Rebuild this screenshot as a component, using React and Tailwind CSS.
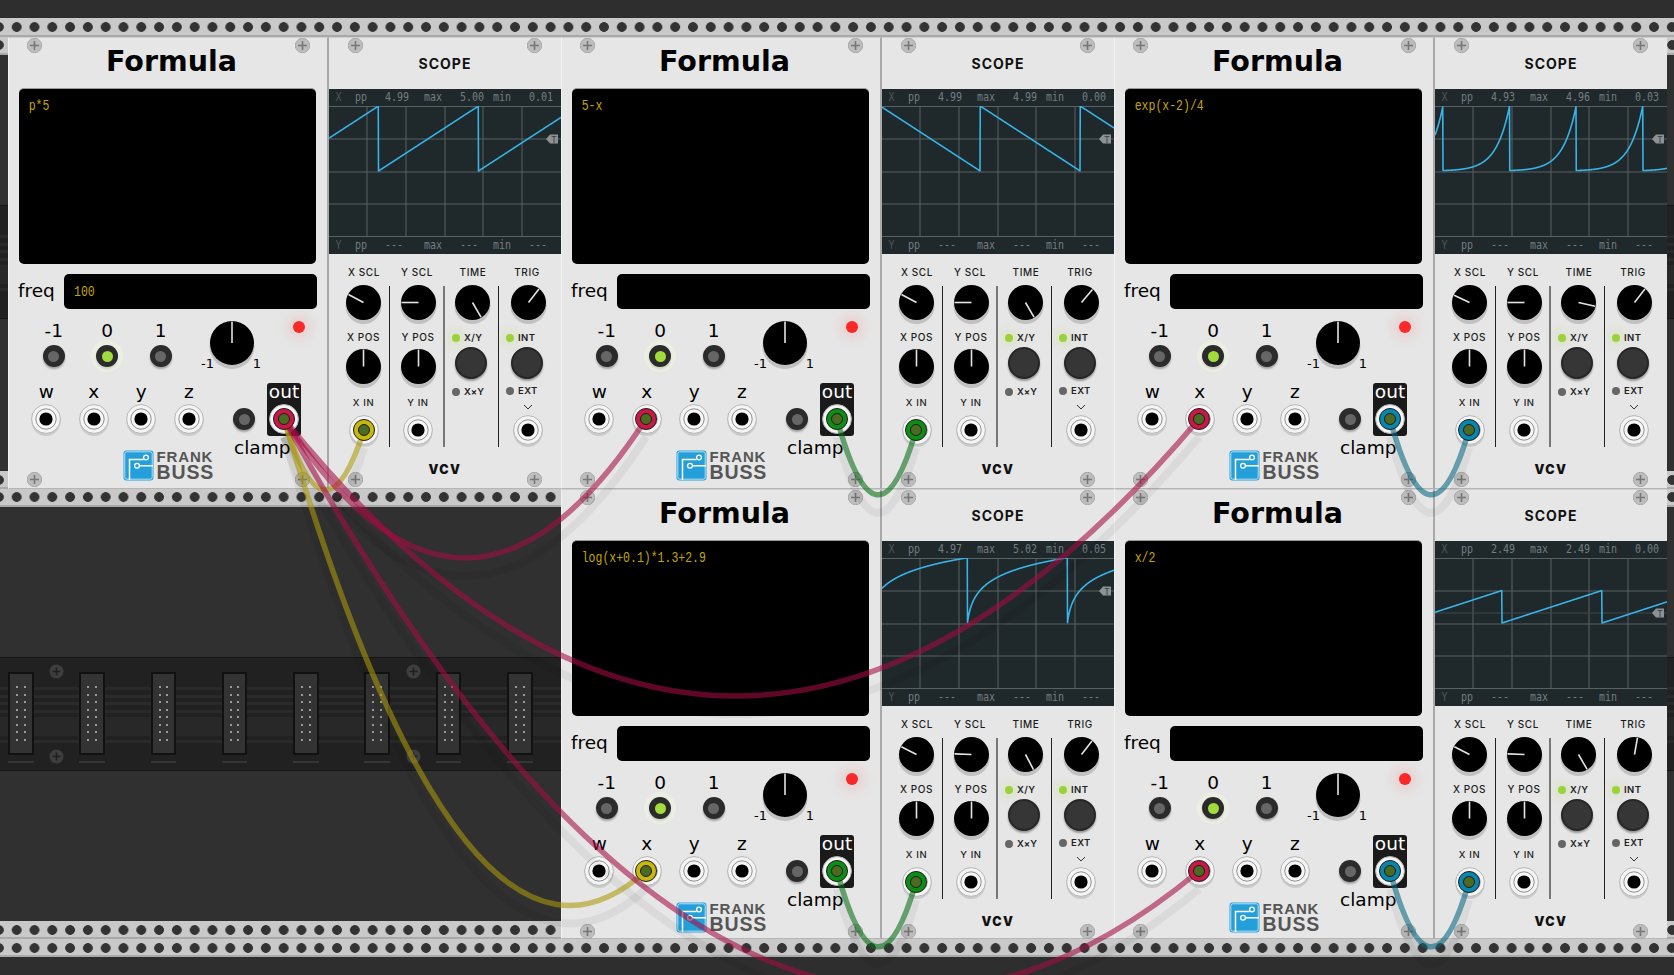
import { clsx } from 'clsx';

const DARK = '#2e2e2e';

const RED = '#c91847';
const YELLOW = '#c9b70e';
const GREEN = '#0c8e15';
const BLUE = '#0986ad';

// cable bodies are a darker shade of the plug colour
const CABLE_SHADE = { [RED]: '#a30c42', [YELLOW]: '#a8980b', [GREEN]: '#066c12', [BLUE]: '#066680' };

const cables = [
    { color: YELLOW, d: 'M284 419 Q324 555 364 430' },
    { color: YELLOW, d: 'M284 419 Q465 1035 646 871' },
    { color: RED, d: 'M284 419 Q465 697 646 419' },
    { color: RED, d: 'M284 419 Q730 973 1199 419' },
    { color: RED, d: 'M284 419 Q741 1252 1199 871' },
    { color: GREEN, d: 'M837 419 Q877 565 916 430' },
    { color: BLUE, d: 'M1390 419 Q1430 565 1469 430' },
    { color: GREEN, d: 'M837 871 Q877 1017 916 882' },
    { color: BLUE, d: 'M1390 871 Q1430 1017 1469 882' },
];

const plugs = [
    [284, 419, RED], [364, 430, YELLOW], [646, 419, RED], [837, 419, GREEN], [916, 430, GREEN],
    [1199, 419, RED], [1390, 419, BLUE], [1469, 430, BLUE], [646, 871, YELLOW], [837, 871, GREEN],
    [916, 882, GREEN], [1199, 871, RED], [1390, 871, BLUE], [1469, 882, BLUE],
];

const scopes = {
    a: { stats: ['4.99', '5.00', '0.01'], fn: (x) => x, period: 100, offset: 49.5, knobs: [-62, -90, 150, 38] },
    b: { stats: ['4.99', '4.99', '0.00'], fn: (x) => 5 - x, period: 100, offset: 98.2, knobs: [-62, -90, 150, 40] },
    c: { stats: ['4.93', '4.96', '0.03'], fn: (x) => Math.exp(x - 2) / 4, period: 66.6, offset: 8, knobs: [-65, -90, 103, 38] },
    d: { stats: ['4.97', '5.02', '0.05'], fn: (x) => Math.log(x + 0.1) * 1.3 + 2.9, period: 100, offset: 85.3, knobs: [-63, -88, 152, 38] },
    e: { stats: ['2.49', '2.49', '0.00'], fn: (x) => x / 2, period: 100, offset: 67, trigger: 55, knobs: [-63, -88, 150, 10] },
};

function wavePath({ fn, period, offset }) {
    let d = '';
    let last = null;
    for (let x = 0; x <= 232; x += 0.25) {
        const cycle = Math.floor((x - offset) / period);
        const phase = (((x - offset) / period) - cycle) * 5;
        const y = 65 - fn(phase) * 13;
        d += (last === null ? 'M' : 'L') + x.toFixed(2) + ' ' + y.toFixed(2);
        last = y;
    }
    return d;
}

function Rail({ className }) {
    return (
        <div
            className={clsx(
                'h-[18px] shrink-0 border-b-2 border-[#a9a9a9] bg-[#c9c9c9] bg-[radial-gradient(circle_at_center,#333333_4.5px,transparent_5.2px)] bg-[length:17.8px_18px]',
                className,
            )}
        />
    );
}

function Connector() {
    return (
        <div className="flex w-[25.5px] shrink-0 flex-col items-center gap-[6px]">
            <div className="h-[83px] w-full border-[2.5px] border-[#111111] bg-[#333333] pt-[12px]">
                <div className="grid grid-cols-[2px_2px] justify-center gap-x-[5.7px] gap-y-[5.5px]">
                    {Array.from({ length: 16 }).map((_, i) => (
                        <span key={i} className="h-[2px] w-[2px] bg-[#9a9a9a]" />
                    ))}
                </div>
            </div>
            <div className="h-[2px] w-full bg-[#363636]" />
        </div>
    );
}

function DarkScrew({ className }) {
    return (
        <svg viewBox="0 0 15 15" className={clsx('absolute h-[15px] w-[15px]', className)}>
            <circle cx="7.5" cy="7.5" r="7" fill="#3e3e3e" />
            <path d="M7.5 3.5V11.5M3.5 7.5H11.5" stroke="#1f1f1f" strokeWidth="1.6" />
        </svg>
    );
}

function Band() {
    return (
        <div className="relative flex h-[114px] shrink-0 gap-[45.8px] border-t border-b border-[#161616] bg-[#212121] bg-[linear-gradient(to_bottom,#212121_29px,#2a2a2a_29px,#2a2a2a_32px,#212121_32px,#212121_37px,#2a2a2a_37px,#2a2a2a_40px,#212121_40px,#212121_44px,#2a2a2a_44px,#2a2a2a_47px,#212121_47px,#212121_52px,#2a2a2a_52px,#2a2a2a_55px,#212121_55px,#212121_59px,#282828_59px,#282828_78px,#212121_78px,#212121_82px,#2a2a2a_82px,#2a2a2a_85px,#212121_85px)] pl-[8px] pt-[14px]">
            {Array.from({ length: 8 }).map((_, i) => (
                <Connector key={i} />
            ))}
            <DarkScrew className="left-[49px] top-[6px]" />
            <DarkScrew className="left-[49px] top-[91px]" />
            <DarkScrew className="left-[406px] top-[6px]" />
            <DarkScrew className="left-[406px] top-[91px]" />
        </div>
    );
}

function RackFill({ className, topRail, bottomRail }) {
    return (
        <div className={clsx('flex shrink-0 flex-col overflow-hidden', className)}>
            <Rail className={topRail} />
            <div className="h-[150px] shrink-0 bg-[#303030]" />
            <Band />
            <div className="flex-1 bg-[#303030]" />
            <Rail className={bottomRail} />
        </div>
    );
}

function Screw({ className }) {
    return (
        <svg viewBox="0 0 15 15" className={clsx('absolute h-[15px] w-[15px]', className)}>
            <circle cx="7.5" cy="7.5" r="7.2" fill="#bdbdbd" stroke="#a8a8a8" />
            <path d="M7.5 3V12M3 7.5H12" stroke="#777777" strokeWidth="1.6" />
        </svg>
    );
}

function Knob({ size, angle = 0 }) {
    const r = size / 2;
    return (
        <svg viewBox={`0 0 ${size} ${size}`} className="shrink-0 overflow-visible" width={size} height={size}>
            <circle cx={r} cy={r + 3.5} r={r + 0.5} fill="#000000" opacity="0.16" />
            <circle cx={r} cy={r} r={r} fill="#000000" />
            <line x1={r} y1={r} x2={r} y2={0.5} stroke="#e4e4e4" strokeWidth="1.6" transform={`rotate(${angle} ${r} ${r})`} />
        </svg>
    );
}

function Port() {
    return (
        <svg viewBox="0 0 30 30" className="h-[30px] w-[30px] shrink-0 overflow-visible">
            <circle cx="15" cy="17.5" r="14.5" fill="#000000" opacity="0.12" />
            <circle cx="15" cy="15" r="14.4" fill="#f4f4f4" stroke="#b5b5b5" />
            <circle cx="15" cy="15" r="10.2" fill="#f7f7f7" stroke="#8f8f8f" />
            <circle cx="15" cy="15" r="6.6" fill="#000000" />
        </svg>
    );
}

function ToggleLight({ on }) {
    return (
        <div
            className={clsx(
                'flex h-[22px] w-[22px] items-center justify-center rounded-full bg-[#2b2b2b] shadow-[0_2px_2px_rgba(0,0,0,0.3)]',
                on && 'ring-[5px] ring-[#eef3e0]/60',
            )}
        >
            <span className={clsx('h-[11px] w-[11px] rounded-full', on ? 'bg-[#a2dc3c]' : 'bg-[#666666]')} />
        </div>
    );
}

function Logo() {
    return (
        <div className="flex w-[91px] shrink-0 items-start gap-[3px]">
            <svg viewBox="0 0 31 31" className="h-[31px] w-[31px] shrink-0">
                <rect x="0.5" y="0.5" width="30" height="30" rx="3" fill="#259fd9" />
                <rect x="1.8" y="1.8" width="27.4" height="27.4" rx="2" fill="none" stroke="#ffffff" strokeOpacity="0.85" strokeWidth="0.8" />
                <path d="M6.5 30V9.5H20.5M16.5 15.7H30" fill="none" stroke="#ffffff" strokeWidth="1.5" />
                <circle cx="23" cy="7.5" r="2.4" fill="#259fd9" stroke="#ffffff" strokeWidth="1.3" />
                <circle cx="14" cy="15.7" r="2.4" fill="#259fd9" stroke="#ffffff" strokeWidth="1.3" />
            </svg>
            <div className="font-['Liberation_Sans',sans-serif] font-bold text-[#555555]">
                <div className="h-[14px] text-[15px] leading-[14px] tracking-[0.85px]">FRANK</div>
                <div className="h-[17px] text-[19.5px] leading-[17px] tracking-[0.9px]">BUSS</div>
            </div>
        </div>
    );
}

function Readout({ children }) {
    return <span className="block origin-left scale-y-125 font-['Liberation_Mono',monospace] text-[11.5px] leading-[14px] text-[#c2a40a]">{children}</span>;
}

function Formula({ expr, freq }) {
    return (
        <div className="relative flex h-full w-[321px] shrink-0 flex-col border-t border-r-2 border-b border-l border-t-[#cfcfcf] border-r-[#a9a9a9] border-b-[#b5b5b5] border-l-[#f2f2f2] bg-[#e6e6e6] font-['DejaVu_Sans',sans-serif] text-[18.5px] text-black">
            <Screw className="left-[17.5px] top-[0px]" />
            <Screw className="left-[285.5px] top-[0px]" />
            <Screw className="left-[17.5px] top-[433.5px]" />
            <Screw className="left-[285.5px] top-[433.5px]" />

            <div className="h-[50px] shrink-0 pl-[7px] pt-[4px] text-center text-[28.5px] font-bold leading-[40px]">Formula</div>

            <div className="ml-[9.7px] h-[176px] w-[297.5px] shrink-0 rounded-[5px] border-t border-[#9a9a9a] bg-black pl-[10px] pt-[10px]">
                <Readout>{expr}</Readout>
            </div>

            <div className="mt-[10px] flex h-[35px] shrink-0 items-center">
                <span className="ml-[9px] w-[46px] shrink-0 -translate-y-[1px]">freq</span>
                <div className="flex h-[35px] w-[252.5px] items-center rounded-[5px] bg-black pl-[10px]">
                    {freq && <Readout>{freq}</Readout>}
                </div>
            </div>

            <div className="mt-[11px] flex h-[63px] shrink-0 items-start pl-[18px]">
                {[['-1', false], ['0', true], ['1', false]].map(([label, on]) => (
                    <div key={label} className="flex w-[53.5px] shrink-0 flex-col items-center">
                        <span className="h-[22px] leading-[22px]">{label}</span>
                        <div className="mt-[3px]">
                            <ToggleLight on={on} />
                        </div>
                    </div>
                ))}
                <div className="ml-[9.5px] flex w-[70px] shrink-0 flex-col items-center pt-[1px]">
                    <Knob size={44} />
                    <div className="-mt-[10px] flex w-full justify-between pl-[4px] pr-[6px] text-[13px] leading-[18px]">
                        <span>-1</span>
                        <span>1</span>
                    </div>
                </div>
                <span className="ml-[26px] mt-[1px] h-[12px] w-[12px] shrink-0 rounded-full bg-[#f9292a] shadow-[0_0_12px_6px_rgba(255,60,60,0.12)]" />
            </div>

            <div className="flex h-[53px] shrink-0 items-start pl-[13.5px]">
                {['w', 'x', 'y', 'z'].map((label) => (
                    <div key={label} className="flex w-[47.5px] shrink-0 flex-col items-center">
                        <span className="h-[18px] leading-[18px]">{label}</span>
                        <div className="mt-[3px]">
                            <Port />
                        </div>
                    </div>
                ))}
                <div className="ml-[20.5px] mt-[25px]">
                    <ToggleLight />
                </div>
                <div className="ml-[12px] flex h-[53px] w-[34px] shrink-0 flex-col items-center rounded-[3px] bg-[#1a1a1a] text-white">
                    <span className="h-[18px] leading-[18px]">out</span>
                    <div className="mt-[3px]">
                        <Port />
                    </div>
                </div>
            </div>

            <div className="flex items-start pl-[113.5px]">
                <div className="mt-[14px]">
                    <Logo />
                </div>
                <span className="ml-[20.5px] h-[24px] leading-[24px]">clamp</span>
            </div>
        </div>
    );
}

function StatRow({ axis, values }) {
    return (
        <div className="grid h-[17px] shrink-0 -translate-y-[0.75px] scale-y-125 grid-cols-[19.5px_30px_39px_36px_33px_36px_auto] items-center pl-[6.5px] font-['DejaVu_Sans_Mono',monospace] text-[10px] leading-[17px] text-[#737e81]">
            <span className="text-[#4d575a]">{axis}</span>
            <span>pp</span>
            <span>{values[0]}</span>
            <span>max</span>
            <span>{values[1]}</span>
            <span>min</span>
            <span>{values[2]}</span>
        </div>
    );
}

function ScopeChart({ scope }) {
    const trigger = scope.trigger ?? 33;
    return (
        <svg viewBox="0 0 232 131" className="block h-[131px] w-[232px] shrink-0">
            <g stroke="#5a6163" strokeWidth="1">
                <path d="M38 0V131M77 0V131M116 0V131M154 0V131M193 0V131" />
                <path d="M0 0.5H232M0 33H232M0 66H232M0 98H232M0 130.5H232" />
            </g>
            {scope.trigger && <path d={`M0 ${trigger}H232`} stroke="#3f4649" strokeWidth="1" />}
            <path d={`M217 ${trigger}l4 -4.5h8v9h-8z`} fill="#8d9395" />
            <text x="225" y={trigger + 3.5} textAnchor="middle" fontSize="9" fill="#3d4447" fontFamily="'DejaVu Sans Mono', monospace">T</text>
            <path d={wavePath(scope)} fill="none" stroke="#37b4e8" strokeWidth="1.6" strokeLinejoin="round" />
        </svg>
    );
}

function Led({ on, label }) {
    return (
        <div className="flex items-center gap-[4px] text-[9.5px] font-semibold leading-[12px] tracking-[0.4px] text-[#222222]">
            <span
                className={clsx(
                    'h-[8px] w-[8px] shrink-0 rounded-full',
                    on ? 'bg-[#9bd23c] shadow-[0_0_8px_4px_rgba(180,220,90,0.22)]' : 'bg-[#666666]',
                )}
            />
            <span>{label}</span>
        </div>
    );
}

function BigButton() {
    return (
        <div className="-ml-[3px] h-[32px] w-[32px] shrink-0 rounded-full border-[2px] border-[#262626] bg-[#363636] shadow-[0_2px_2px_rgba(0,0,0,0.35)]" />
    );
}

function Scope({ id }) {
    const scope = scopes[id];
    const [xScl, yScl, time, trig] = scope.knobs;
    return (
        <div className="relative flex h-full w-[232px] shrink-0 flex-col border-t border-b border-t-[#cfcfcf] border-b-[#b5b5b5] bg-[#e6e6e6] font-['Inter',sans-serif] text-[#1c1c1c]">
            <Screw className="left-[18.5px] top-[0px]" />
            <Screw className="left-[197.5px] top-[0px]" />
            <Screw className="left-[18.5px] top-[433.5px]" />
            <Screw className="left-[197.5px] top-[433.5px]" />

            <div className="h-[51px] shrink-0 text-center text-[14px] font-bold leading-[52px] tracking-[1px] text-[#111111]">SCOPE</div>

            <div className="flex h-[165px] shrink-0 flex-col bg-[#1f282b]">
                <StatRow axis="X" values={scope.stats} />
                <ScopeChart scope={scope} />
                <StatRow axis="Y" values={['---', '---', '---']} />
            </div>

            <div className="grid h-[32px] shrink-0 grid-cols-[61px_55px_54px_62px] items-center pt-[4px] text-center text-[10px] font-medium leading-[12px] tracking-[0.6px]">
                <span className="pl-[9px]">X SCL</span>
                <span className="pr-[1px]">Y SCL</span>
                <span className="pl-[2px]">TIME</span>
                <span className="pr-[6px]">TRIG</span>
            </div>

            <div className="grid h-[161px] shrink-0 grid-cols-[61px_55px_54px_62px] text-[10px] font-medium leading-[12px] tracking-[0.6px]">
                <div className="flex flex-col items-center border-r border-[#222222] pl-[9px]">
                    <div className="-mt-[1.5px]">
                        <Knob size={35} angle={xScl} />
                    </div>
                    <span className="flex h-[29px] items-center pt-[6px]">X POS</span>
                    <Knob size={35} />
                    <span className="flex h-[31.5px] items-center pt-[7px] text-[9.5px]">X IN</span>
                    <Port />
                </div>
                <div className="flex flex-col items-center border-r-2 border-[#777777] pl-[3px]">
                    <div className="-mt-[1.5px]">
                        <Knob size={35} angle={yScl} />
                    </div>
                    <span className="flex h-[29px] items-center pt-[6px]">Y POS</span>
                    <Knob size={35} />
                    <span className="flex h-[31.5px] items-center pt-[7px] text-[9.5px]">Y IN</span>
                    <Port />
                </div>
                <div className="flex flex-col items-center border-r border-[#222222] pl-[2px]">
                    <div className="-mt-[1.5px]">
                        <Knob size={35} angle={time} />
                    </div>
                    <div className="flex h-[27px] w-full items-center pl-[5px] pt-[10px]">
                        <Led on label="X/Y" />
                    </div>
                    <BigButton />
                    <div className="flex h-[26px] w-full items-center pl-[5px]">
                        <Led label="X×Y" />
                    </div>
                </div>
                <div className="flex flex-col items-center pr-[4px]">
                    <div className="-mt-[1.5px]">
                        <Knob size={35} angle={trig} />
                    </div>
                    <div className="flex h-[27px] w-full items-center pl-[7px] pt-[10px]">
                        <Led on label="INT" />
                    </div>
                    <BigButton />
                    <div className="flex h-[25px] w-full items-center pl-[7px]">
                        <Led label="EXT" />
                    </div>
                    <svg viewBox="0 0 10 6" className="h-[6px] w-[10px] shrink-0">
                        <path d="M1 1L5 5L9 1" fill="none" stroke="#333333" strokeWidth="1" />
                    </svg>
                    <div className="mt-[5.5px]">
                        <Port />
                    </div>
                </div>
            </div>

            <div className="mt-[14px] text-center text-[12.5px] font-black leading-[18px] tracking-[1.4px] text-[#111111]">VCV</div>
        </div>
    );
}

function CableLayer() {
    return (
        <svg viewBox="0 0 1674 975" className="pointer-events-none absolute left-0 top-0 h-[975px] w-[1674px]">
            {cables.map((cable) => (
                <path key={cable.d} d={cable.d} transform="translate(0 18)" fill="none" stroke="#000000" strokeOpacity="0.05" strokeWidth="8" />
            ))}
            {cables.map((cable) => (
                <path key={cable.d} d={cable.d} fill="none" stroke={CABLE_SHADE[cable.color]} strokeOpacity="0.58" strokeWidth="5.5" />
            ))}
            {plugs.map(([x, y, color]) => (
                <g key={`${x}-${y}`}>
                    <circle cx={x} cy={y} r="10.5" fill={color} stroke="#222222" />
                    <circle cx={x} cy={y} r="5.5" fill="#4b6b22" stroke="#1c1c1c" />
                </g>
            ))}
        </svg>
    );
}

export default function App() {
    return (
        <div className="relative flex h-[975px] w-[1674px] flex-col overflow-hidden" style={{ backgroundColor: DARK }}>
            <div className="h-[18px] shrink-0" />
            <Rail className="h-[19px] bg-[position:7.8px_0]" />

            <div className="flex h-[452px] shrink-0">
                <RackFill className="w-[8px]" topRail="bg-[position:7.8px_-1px]" bottomRail="bg-[position:7.8px_0]" />
                <Formula expr="p*5" freq="100" />
                <Scope id="a" />
                <Formula expr="5-x" />
                <Scope id="b" />
                <Formula expr="exp(x-2)/4" />
                <Scope id="c" />
                <RackFill className="flex-1" topRail="bg-[position:-3.8px_-1px]" bottomRail="bg-[position:-3.8px_0]" />
            </div>

            <div className="flex h-[450px] shrink-0">
                <RackFill className="w-[561px]" topRail="bg-[position:7.8px_-1px]" bottomRail="bg-[position:7.8px_0]" />
                <Formula expr="log(x+0.1)*1.3+2.9" />
                <Scope id="d" />
                <Formula expr="x/2" />
                <Scope id="e" />
                <RackFill className="flex-1" topRail="bg-[position:-3.8px_-1px]" bottomRail="bg-[position:-3.8px_0]" />
            </div>

            <Rail className="bg-[position:7.8px_0]" />

            <CableLayer />
        </div>
    );
}
